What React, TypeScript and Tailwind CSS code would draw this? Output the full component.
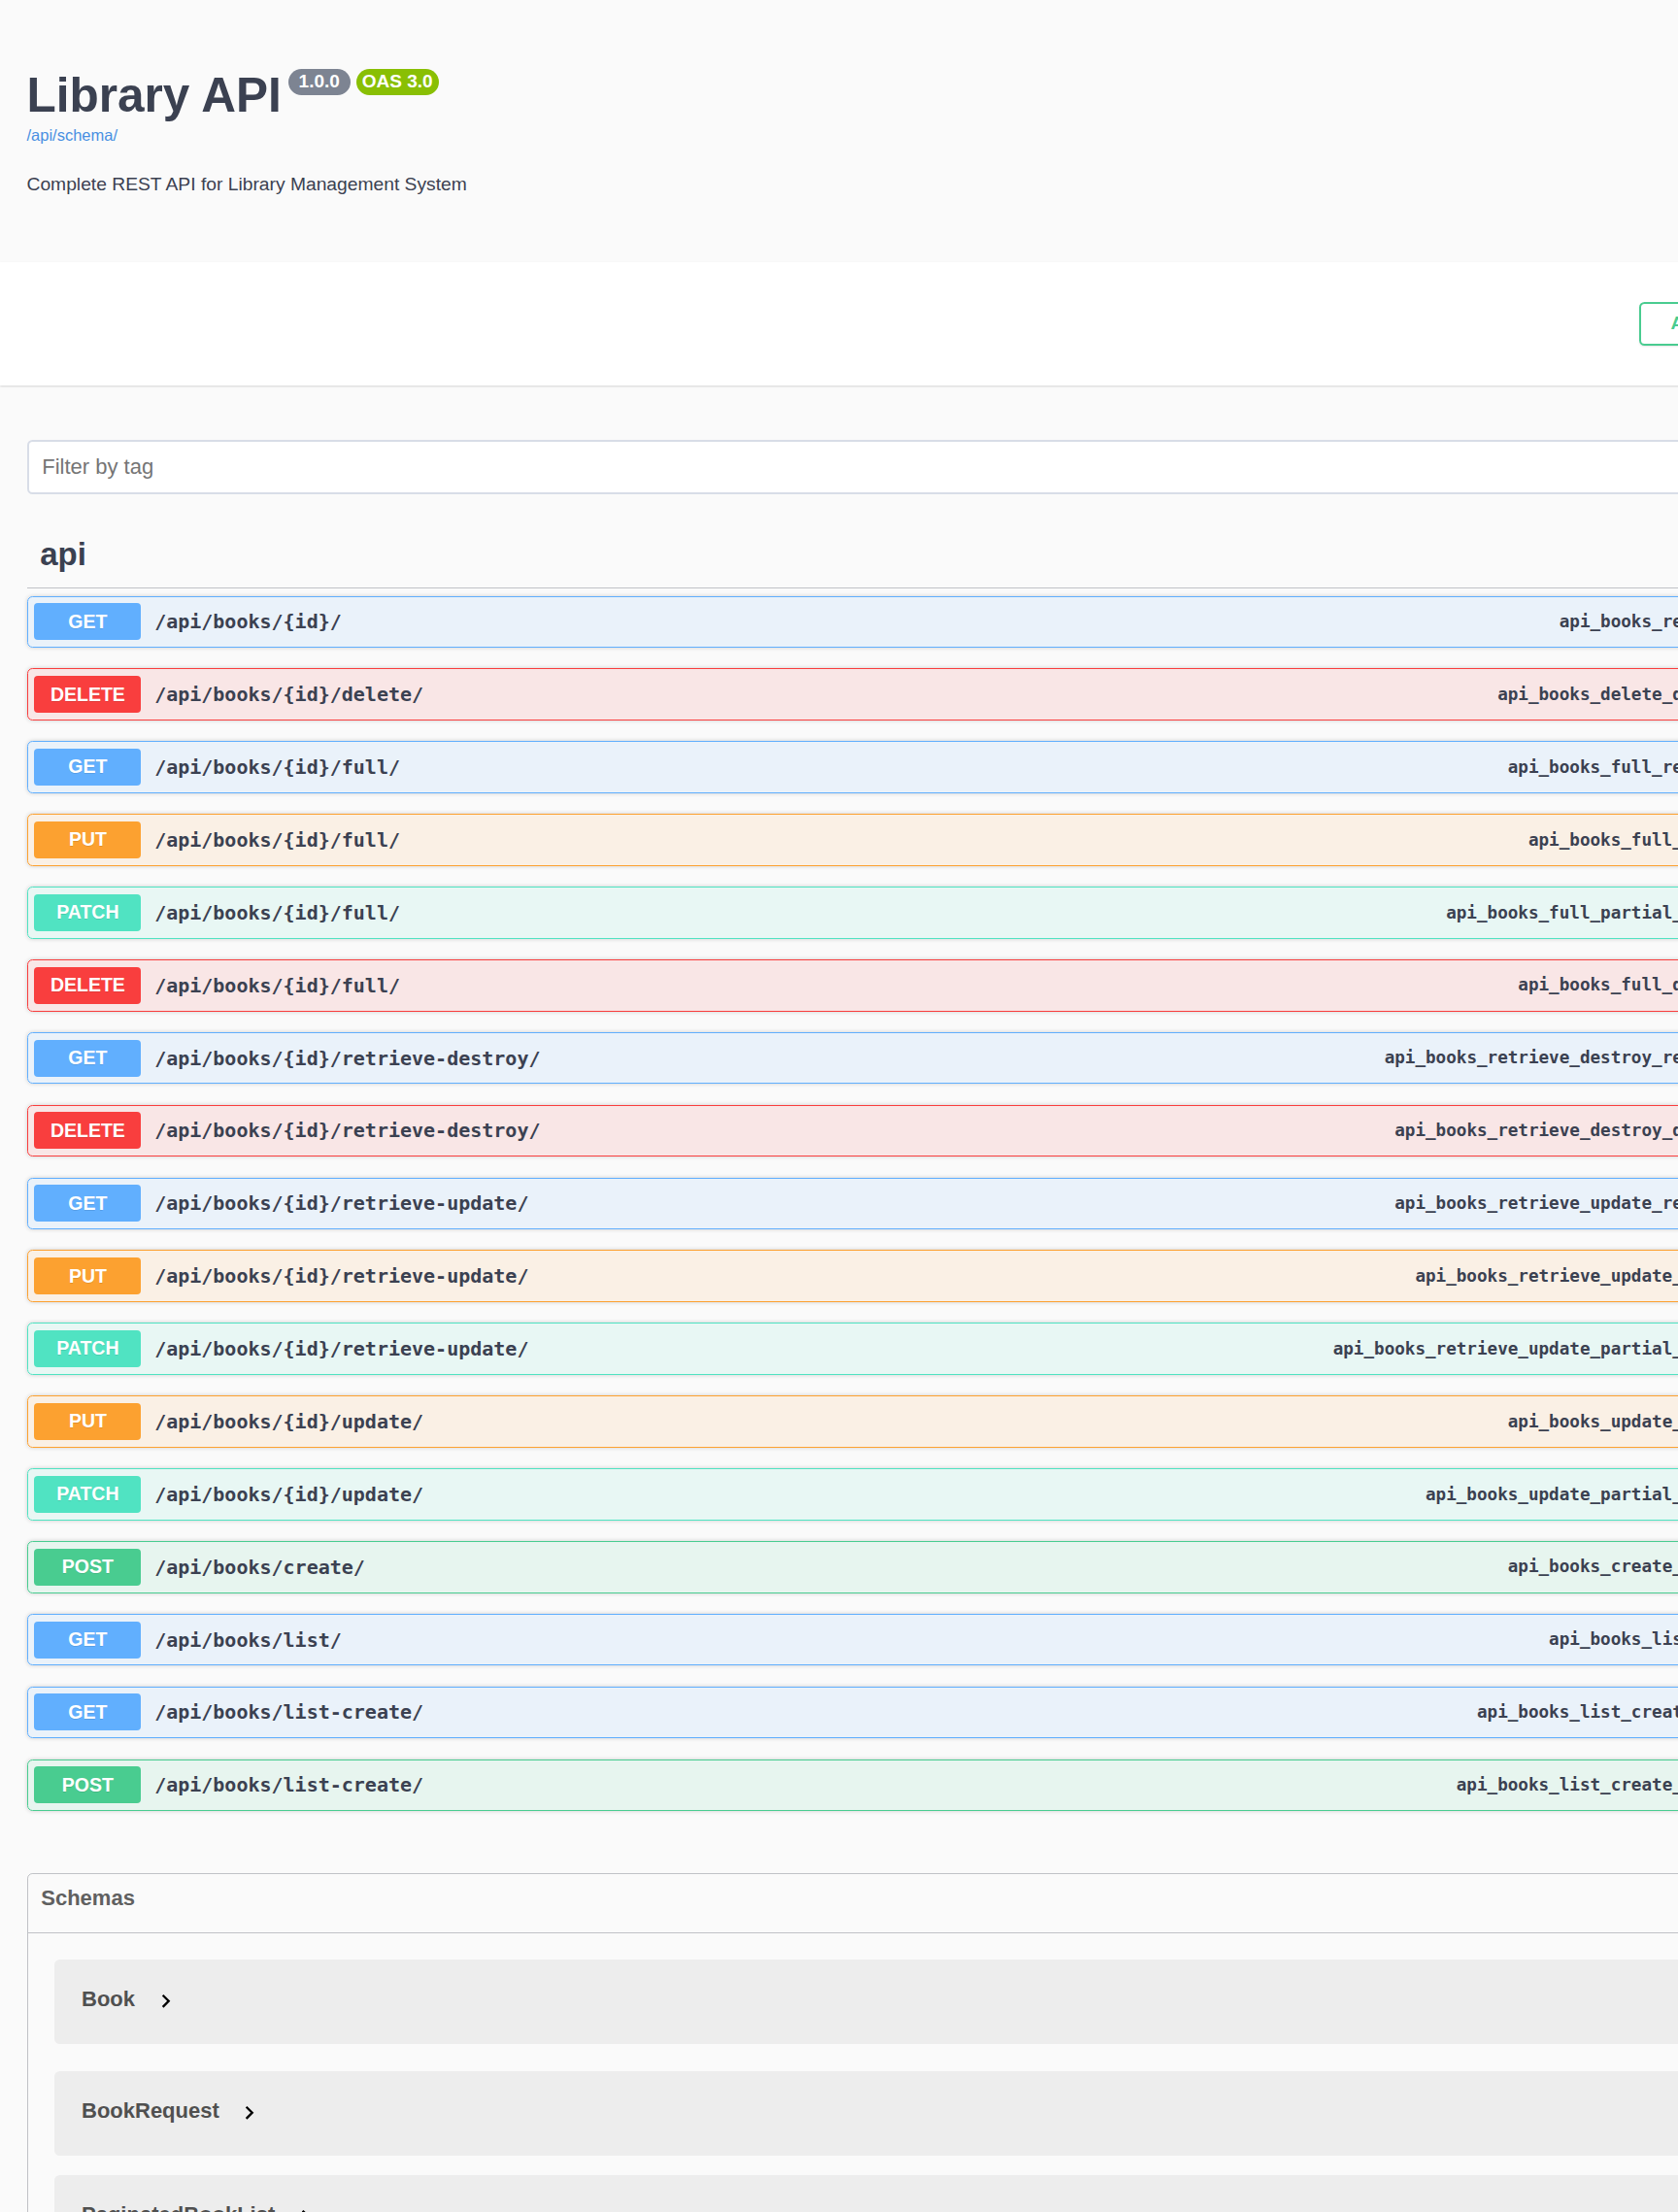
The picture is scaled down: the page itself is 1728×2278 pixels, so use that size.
import React from "react";

type Method = "GET" | "POST" | "PUT" | "PATCH" | "DELETE";

interface Operation {
  method: Method;
  path: string;
  operationId: string;
}

const operations: Operation[] = [
  { method: "GET", path: "/api/books/{id}/", operationId: "api_books_retrieve" },
  { method: "DELETE", path: "/api/books/{id}/delete/", operationId: "api_books_delete_destroy" },
  { method: "GET", path: "/api/books/{id}/full/", operationId: "api_books_full_retrieve" },
  { method: "PUT", path: "/api/books/{id}/full/", operationId: "api_books_full_update" },
  { method: "PATCH", path: "/api/books/{id}/full/", operationId: "api_books_full_partial_update" },
  { method: "DELETE", path: "/api/books/{id}/full/", operationId: "api_books_full_destroy" },
  { method: "GET", path: "/api/books/{id}/retrieve-destroy/", operationId: "api_books_retrieve_destroy_retrieve" },
  { method: "DELETE", path: "/api/books/{id}/retrieve-destroy/", operationId: "api_books_retrieve_destroy_destroy" },
  { method: "GET", path: "/api/books/{id}/retrieve-update/", operationId: "api_books_retrieve_update_retrieve" },
  { method: "PUT", path: "/api/books/{id}/retrieve-update/", operationId: "api_books_retrieve_update_update" },
  { method: "PATCH", path: "/api/books/{id}/retrieve-update/", operationId: "api_books_retrieve_update_partial_update" },
  { method: "PUT", path: "/api/books/{id}/update/", operationId: "api_books_update_update" },
  { method: "PATCH", path: "/api/books/{id}/update/", operationId: "api_books_update_partial_update" },
  { method: "POST", path: "/api/books/create/", operationId: "api_books_create_create" },
  { method: "GET", path: "/api/books/list/", operationId: "api_books_list_list" },
  { method: "GET", path: "/api/books/list-create/", operationId: "api_books_list_create_list" },
  { method: "POST", path: "/api/books/list-create/", operationId: "api_books_list_create_create" },
];

const methodStyles: Record<Method, { row: string; badge: string }> = {
  GET: { row: "border-[#61affe] bg-[#61affe]/10", badge: "bg-[#61affe]" },
  POST: { row: "border-[#49cc90] bg-[#49cc90]/10", badge: "bg-[#49cc90]" },
  PUT: { row: "border-[#fca130] bg-[#fca130]/10", badge: "bg-[#fca130]" },
  PATCH: { row: "border-[#50e3c2] bg-[#50e3c2]/10", badge: "bg-[#50e3c2]" },
  DELETE: { row: "border-[#f93e3e] bg-[#f93e3e]/10", badge: "bg-[#f93e3e]" },
};

const schemas = ["Book", "BookRequest", "PaginatedBookList", "PatchedBookRequest"];

const LockIcon = ({ className = "" }: { className?: string }) => (
  <svg viewBox="0 0 20 20" className={className} fill="currentColor">
    <path d="M15.8 8H14V5.6C14 2.703 12.665 1 10 1 7.334 1 6 2.703 6 5.6V6h2v-.801C8 3.754 8.797 3 10 3c1.203 0 2 .754 2 2.199V8H4c-.553 0-1 .646-1 1.199V17c0 .549.428 1.139.951 1.307l1.197.387C5.672 18.861 6.55 19 7.1 19h5.8c.549 0 1.428-.139 1.951-.307l1.196-.387c.524-.167.953-.757.953-1.306V9.199C17 8.646 16.352 8 15.8 8z" />
  </svg>
);

const ChevronRight = ({ className = "" }: { className?: string }) => (
  <svg viewBox="0 0 24 24" className={className} fill="currentColor">
    <path d="M10 6 8.59 7.41 13.17 12l-4.58 4.59L10 18l6-6z" />
  </svg>
);

const ChevronDown = ({ className = "" }: { className?: string }) => (
  <svg viewBox="0 0 20 20" className={className} fill="currentColor">
    <path d="M17.418 6.109c.272-.268.709-.268.979 0s.271.701 0 .969l-7.908 7.83c-.27.268-.707.268-.979 0l-7.908-7.83c-.27-.268-.27-.701 0-.969.271-.268.709-.268.979 0L10 13.25l7.418-7.141z" />
  </svg>
);

const OperationRow = ({ op }: { op: Operation }) => {
  const s = methodStyles[op.method];
  return (
    <div
      className={`mb-[21.25px] flex h-[53.625px] items-center rounded-[5.5px] border px-[6.875px] shadow-[0_0_4px_rgba(0,0,0,0.19)] ${s.row}`}
    >
      <div
        className={`flex h-[38px] w-[110px] shrink-0 items-center justify-center rounded-[4px] text-[19.5px] font-bold text-white [text-shadow:0_1px_0_rgba(0,0,0,0.1)] ${s.badge}`}
      >
        {op.method}
      </div>
      <span className="ml-[13.75px] font-['DejaVu_Sans_Mono',monospace] text-[20px] font-bold text-[#3b4151]">
        {op.path}
      </span>
      <div className="flex-1" />
      <span className="font-['DejaVu_Sans_Mono',monospace] text-[17.6px] font-bold text-[#3b4151]">
        {op.operationId}
      </span>
      <div className="pl-[13.75px] text-[#3b4151] opacity-40">
        <LockIcon className="h-[27.5px] w-[27.5px]" />
      </div>
      <div className="px-[13.75px] text-[#3b4151]">
        <ChevronDown className="h-[27.5px] w-[27.5px]" />
      </div>
    </div>
  );
};

export default function App() {
  return (
    <div className="h-[2278px] w-[1728px] overflow-hidden bg-[#fafafa] font-['Liberation_Sans',Arial,sans-serif] text-[#3b4151]">
      <div className="w-[1928px]">
        {/* Info */}
        <div className="px-[27.5px] pt-[68.75px] pb-[68.75px]">
          <div className="flex items-start">
            <h2 className="text-[49.5px] font-bold leading-[57px]">Library API</h2>
            <span className="ml-[7px] mt-[2px] flex h-[27px] w-[64px] items-center justify-center rounded-full bg-[#7d8492] text-[19px] font-bold text-white">
              1.0.0
            </span>
            <span className="ml-[6px] mt-[2px] flex h-[27px] w-[85px] items-center justify-center rounded-full bg-[#89bf04] text-[19px] font-bold text-white">
              OAS 3.0
            </span>
          </div>
          <div className="mt-[4px] text-[16.5px] leading-[19px] text-[#4990e2]">/api/schema/</div>
          <p className="mt-[30px] text-[19.25px] leading-[22px]">
            Complete REST API for Library Management System
          </p>
        </div>

        {/* Scheme container */}
        <div className="flex justify-end bg-white px-[27.5px] py-[41px] shadow-[0_1px_2px_0_rgba(0,0,0,0.15)]">
          <button className="flex h-[45px] w-[213px] items-center rounded-[5.5px] border-2 border-[#49cc90] bg-transparent pl-[31px] text-[19.25px] font-bold text-[#49cc90] shadow-[0_1px_2px_rgba(0,0,0,0.1)]">
            Authorize
            <LockIcon className="ml-[13.75px] h-[27.5px] w-[27.5px]" />
          </button>
        </div>

        <div className="px-[27.5px]">
          {/* Filter */}
          <input
            placeholder="Filter by tag"
            className="mt-[56.5px] h-[55.5px] w-full rounded-[5.5px] border-[2.75px] border-[#d8dde7] bg-white px-[13.75px] text-[22px] text-[#3b4151] outline-none placeholder:text-[#757575]"
          />

          {/* Tag */}
          <div className="mt-[27.5px] flex h-[70px] items-center border-b border-[#3b4151]/30 pl-[13.75px]">
            <h3 className="text-[33px] font-bold">api</h3>
          </div>

          <div className="mt-[7.5px]">
            {operations.map((op, i) => (
              <OperationRow key={i} op={op} />
            ))}
          </div>

          {/* Schemas */}
          <section className="mt-[63.5px] rounded-[5.5px] border border-[#3b4151]/30">
            <div className="flex h-[61px] items-start justify-between border-b border-[#3b4151]/30 pl-[13.75px] pr-[27.5px] pt-[12.5px]">
              <h4 className="text-[22px] font-bold leading-[25px] text-[#606060]">Schemas</h4>
              <ChevronDown className="mt-[4px] h-[27.5px] w-[27.5px] text-[#606060]" />
            </div>
            <div className="px-[27.5px] pt-[27.5px]">
              {schemas.map((name, i) => (
                <div
                  key={name}
                  className={`flex h-[86.7px] items-start rounded-[5.5px] bg-black/5 pl-[28px] pt-[27.5px] ${
                    i === 0 ? "mb-[28.3px]" : "mb-[20.3px]"
                  }`}
                >
                  <span className="text-[22px] font-bold leading-[25px] text-[#505050]">{name}</span>
                  <ChevronRight className="ml-[17.5px] mt-[1.5px] h-[27.5px] w-[27.5px] text-black" />
                </div>
              ))}
            </div>
          </section>
        </div>
      </div>
    </div>
  );
}
